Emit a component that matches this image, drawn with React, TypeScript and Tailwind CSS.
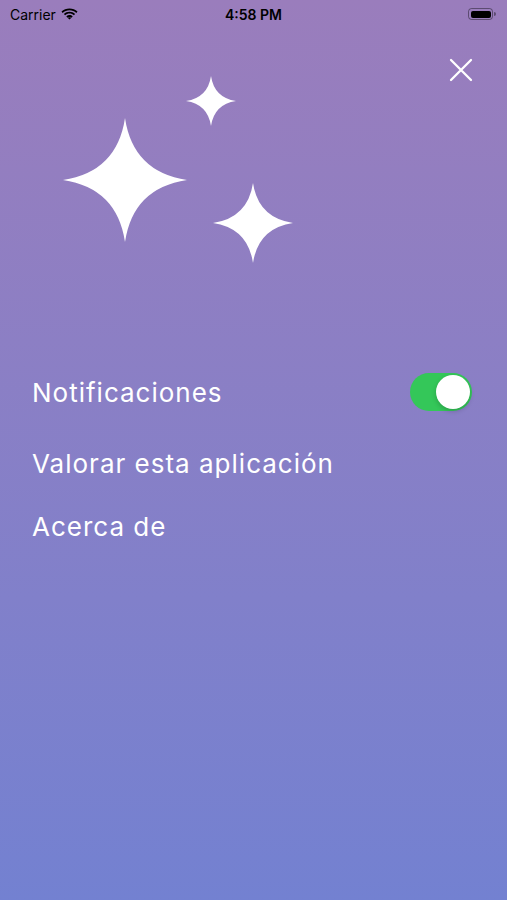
import React from 'react';

// four-pointed sparkle, concave sides
const sparkle = (cx: number, cy: number, r: number) => {
  const c = r * 0.13;
  return `M ${cx} ${cy - r} Q ${cx + c} ${cy - c} ${cx + r} ${cy} Q ${cx + c} ${cy + c} ${cx} ${cy + r} Q ${cx - c} ${cy + c} ${cx - r} ${cy} Q ${cx - c} ${cy - c} ${cx} ${cy - r} Z`;
};

const Sparkles: React.FC = () => (
  <svg width="300" height="250" viewBox="0 28 300 250" className="block">
    <path d={sparkle(125, 180, 62)} fill="white" />
    <path d={sparkle(211, 101, 25)} fill="white" />
    <path d={sparkle(253, 223, 40)} fill="white" />
  </svg>
);

const StatusBar: React.FC = () => (
  <div className="grid grid-cols-3 items-center h-[28px] px-[10px] text-black text-[14px] font-['Inter',sans-serif]">
    <div className="flex items-center gap-[5px]">
      <span>Carrier</span>
      <svg width="17" height="12" viewBox="0 0 17 12">
        <path d="M8.5 2.2c2.6 0 5 1 6.8 2.7l1.2-1.3C14.4 1.6 11.6.4 8.5.4S2.6 1.6.5 3.6l1.2 1.3C3.5 3.2 5.9 2.2 8.5 2.2z" fill="black" />
        <path d="M8.5 5.6c1.7 0 3.2.6 4.4 1.7l1.2-1.3C12.6 4.6 10.6 3.8 8.5 3.8S4.4 4.6 2.9 6l1.2 1.3c1.2-1.1 2.7-1.7 4.4-1.7z" fill="black" />
        <path d="M8.5 8.9c.8 0 1.5.3 2 .8l1.2-1.3c-.9-.8-2-1.3-3.2-1.3s-2.3.5-3.2 1.3l1.2 1.3c.5-.5 1.2-.8 2-.8z M8.5 11.6l1.6-1.7c-.4-.4-1-.6-1.6-.6s-1.2.2-1.6.6z" fill="black" />
      </svg>
    </div>
    <div className="text-center font-semibold">4:58 PM</div>
    <div className="flex justify-end pr-[1px]">
      <div className="flex items-center">
        <div className="w-[25px] h-[12px] rounded-[3.5px] border border-black/40 p-[1.5px]">
          <div className="w-full h-full rounded-[2px] bg-black" />
        </div>
        <div className="w-[1.5px] h-[4px] rounded-r-sm bg-black/40 ml-[1px]" />
      </div>
    </div>
  </div>
);

const Toggle: React.FC<{ on: boolean; onChange: () => void }> = ({ on, onChange }) => (
  <button
    type="button"
    onClick={onChange}
    className={`w-[62px] h-[38px] rounded-full p-[2px] flex ${on ? 'justify-end bg-[#34c759]' : 'justify-start bg-white/30'}`}
  >
    <span className="w-[34px] h-[34px] rounded-full bg-white shadow-[0_2px_5px_rgba(0,0,0,0.2)]" />
  </button>
);

export default function App() {
  const [notify, setNotify] = React.useState(true);

  return (
    <div className="w-full h-[900px] overflow-hidden bg-gradient-to-b from-[#9a7dbc] to-[#7381d1] font-['Inter',sans-serif]">
      <StatusBar />

      <div className="flex justify-between items-start">
        <Sparkles />
        <button type="button" className="mt-[30px] mr-[34px]" title="Cerrar">
          <svg width="24" height="24" viewBox="0 0 24 24">
            <path d="M2 2 L22 22 M22 2 L2 22" stroke="white" strokeWidth="2.3" strokeLinecap="round" />
          </svg>
        </button>
      </div>

      <div className="mt-[94px] pl-[32px] pr-[35px] text-white text-[26px] tracking-[1px]">
        <div className="h-[40px] flex items-center justify-between">
          <span>Notificaciones</span>
          <Toggle on={notify} onChange={() => setNotify(!notify)} />
        </div>
        <div className="h-[40px] mt-[31px] flex items-center">Valorar esta aplicación</div>
        <div className="h-[40px] mt-[23px] flex items-center">Acerca de</div>
      </div>
    </div>
  );
}
